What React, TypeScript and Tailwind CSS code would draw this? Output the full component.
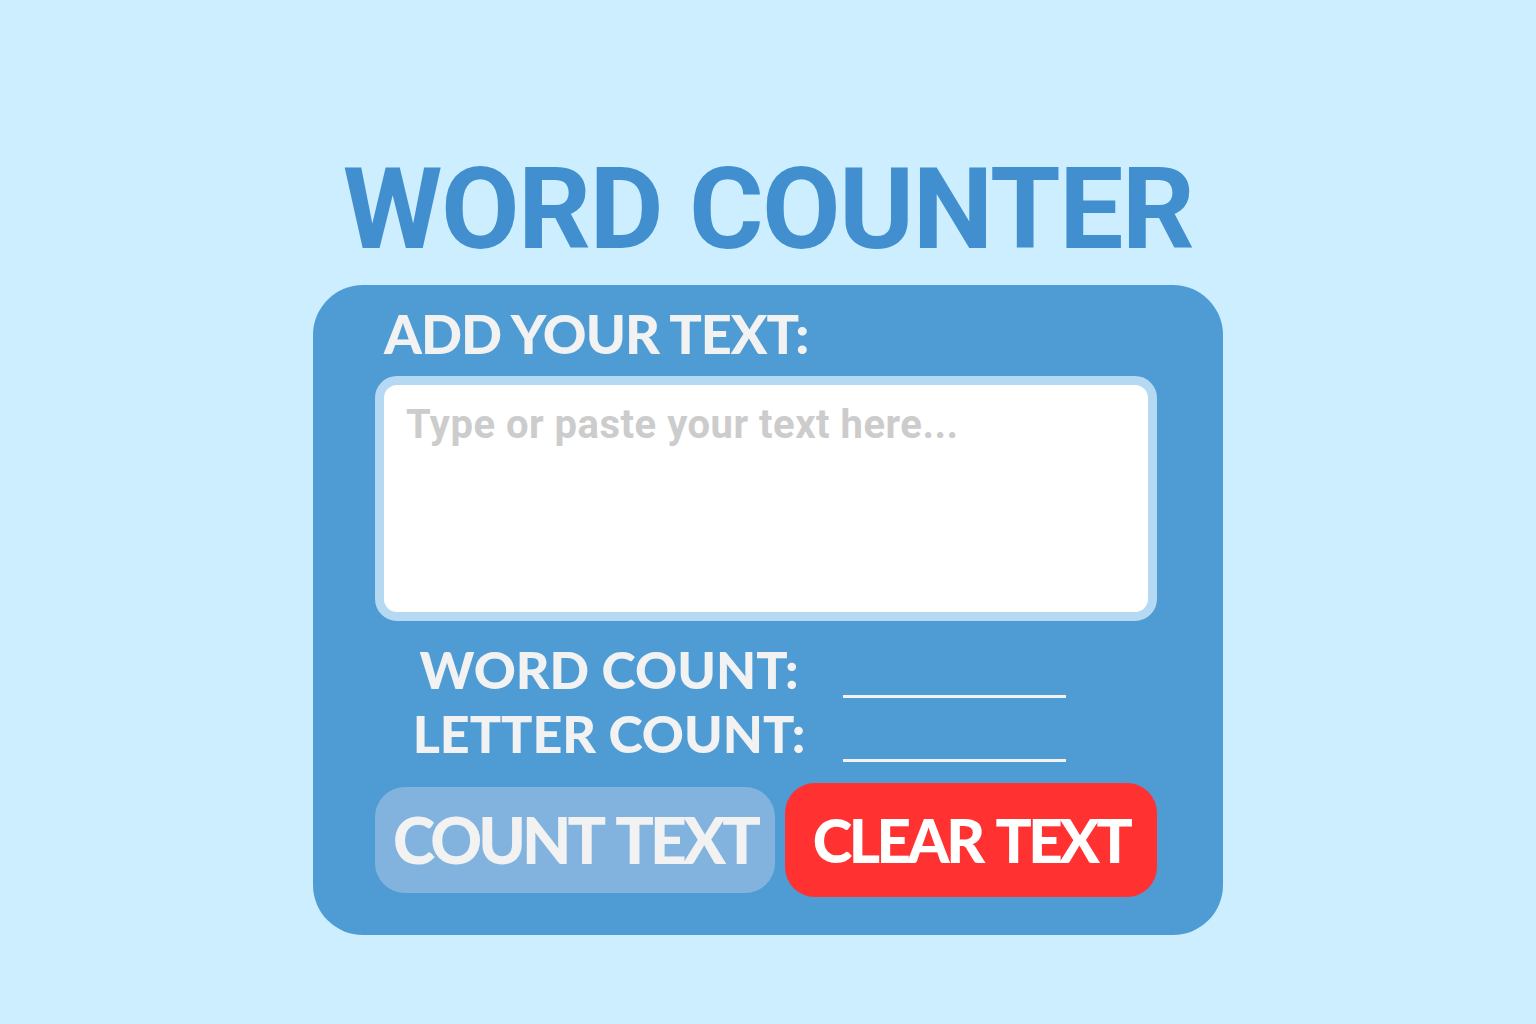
export default function App() {
  return (
    <div className="min-h-screen w-full bg-[#cceefe] flex flex-col items-center pt-[152px]">
      <h1
        className="text-[114px] leading-none font-bold text-[#418fce] tracking-[-1.5px]"
        style={{ fontFamily: "Roboto, 'Liberation Sans', sans-serif" }}
      >
        WORD COUNTER
      </h1>

      <div
        className="mt-[19px] w-[910px] h-[650px] rounded-[50px] bg-[#4f9cd4] pl-[62px] pr-[66px] pt-[22px] flex flex-col"
        style={{ fontFamily: "Lato, 'Liberation Sans', sans-serif" }}
      >
        <label className="pl-[9px] text-[54px] leading-none font-black tracking-[-1px] text-[#f2f2f2]">ADD YOUR TEXT:</label>

        <textarea
          placeholder="Type or paste your text here..."
          className="mt-[15px] w-[782px] h-[245px] resize-none rounded-[22px] border-[9px] border-[#b5d9f3] bg-white px-[22px] pt-[20px] text-[40px] leading-none font-bold tracking-[0.5px] text-gray-700 outline-none placeholder:text-[#cccccc]"
          style={{ fontFamily: "Roboto, 'Liberation Sans', sans-serif" }}
        />

        <div className="mt-[16px] flex flex-col text-[52px] leading-[64px] font-black text-[#f2f2f2]">
          <div className="flex">
            <span className="w-[468px] text-center">WORD COUNT:</span>
            <span className="self-end mb-[3px] w-[223px] h-[3px] bg-[#f2f2f2]" />
          </div>
          <div className="flex">
            <span className="w-[468px] text-center">LETTER COUNT:</span>
            <span className="self-end mb-[3px] w-[223px] h-[3px] bg-[#f2f2f2]" />
          </div>
        </div>

        <div className="mt-[18px] flex items-center gap-[10px] h-[114px]">
          <button className="w-[400px] h-[106px] rounded-[30px] bg-[#82b3de] text-[64px] leading-none font-black tracking-[-4px] [word-spacing:6px] text-[#f2f2f2]">
            COUNT TEXT
          </button>
          <button className="w-[372px] h-[114px] rounded-[30px] bg-[#ff3131] text-[60px] leading-none font-black tracking-[-3.5px] [word-spacing:5px] text-white">
            CLEAR TEXT
          </button>
        </div>
      </div>
    </div>
  )
}
